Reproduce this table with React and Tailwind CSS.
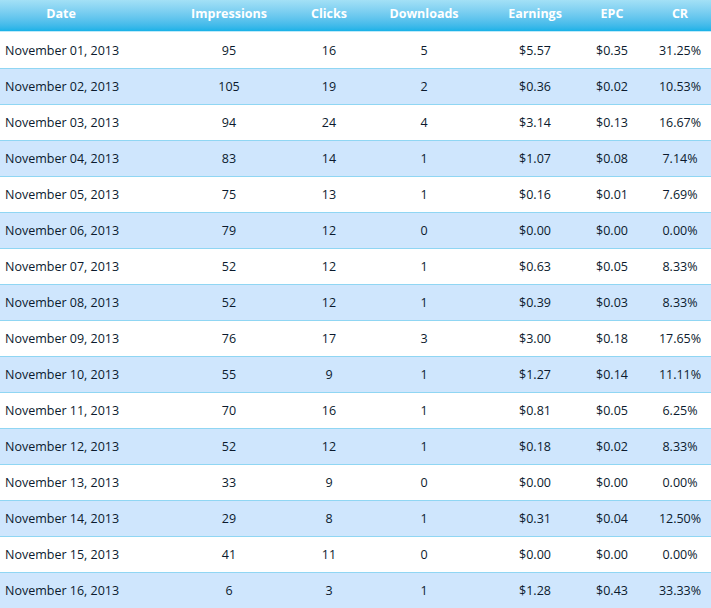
const rows = [
  ["November 01, 2013", 95, 16, 5, "$5.57", "$0.35", "31.25%"],
  ["November 02, 2013", 105, 19, 2, "$0.36", "$0.02", "10.53%"],
  ["November 03, 2013", 94, 24, 4, "$3.14", "$0.13", "16.67%"],
  ["November 04, 2013", 83, 14, 1, "$1.07", "$0.08", "7.14%"],
  ["November 05, 2013", 75, 13, 1, "$0.16", "$0.01", "7.69%"],
  ["November 06, 2013", 79, 12, 0, "$0.00", "$0.00", "0.00%"],
  ["November 07, 2013", 52, 12, 1, "$0.63", "$0.05", "8.33%"],
  ["November 08, 2013", 52, 12, 1, "$0.39", "$0.03", "8.33%"],
  ["November 09, 2013", 76, 17, 3, "$3.00", "$0.18", "17.65%"],
  ["November 10, 2013", 55, 9, 1, "$1.27", "$0.14", "11.11%"],
  ["November 11, 2013", 70, 16, 1, "$0.81", "$0.05", "6.25%"],
  ["November 12, 2013", 52, 12, 1, "$0.18", "$0.02", "8.33%"],
  ["November 13, 2013", 33, 9, 0, "$0.00", "$0.00", "0.00%"],
  ["November 14, 2013", 29, 8, 1, "$0.31", "$0.04", "12.50%"],
  ["November 15, 2013", 41, 11, 0, "$0.00", "$0.00", "0.00%"],
  ["November 16, 2013", 6, 3, 1, "$1.28", "$0.43", "33.33%"],
];

const headers = ["Date", "Impressions", "Clicks", "Downloads", "Earnings", "EPC", "CR"];

// each column is placed so its text centre sits where the screenshot has it
const cols = [
  "w-[122px] shrink-0",
  "ml-[57px] w-[100px] shrink-0 text-center",
  "ml-[10px] w-[80px] shrink-0 text-center",
  "ml-[10px] w-[90px] shrink-0 text-center",
  "ml-[26px] w-[80px] shrink-0 text-center",
  "ml-[7px] w-[60px] shrink-0 text-center",
  "ml-[8px] w-[60px] shrink-0 text-center",
];

export default function App() {
  return (
    <div className="w-[711px] h-[608px] overflow-hidden bg-white">
      <div className="flex h-[32px] items-center border-b border-[#bfeaf9] bg-gradient-to-b from-[#a3e0f6] to-[#17b2e7] pb-[2px] font-['Open_Sans',sans-serif] text-[12.5px] font-bold text-white">
        {headers.map((h, i) => (
          <div key={h} className={cols[i] + (i === 0 ? " text-center" : "")}>
            {h}
          </div>
        ))}
      </div>
      {rows.map((r, ri) => (
        <div
          key={r[0]}
          className={[
            "flex h-[36px] items-center whitespace-nowrap pt-[2px] font-['Open_Sans',sans-serif] text-[12.5px] text-[#0b1a2e]",
            ri > 0 ? "border-t border-[#90d6f3]" : "",
            ri % 2 === 1 ? "bg-[#cfe6fd]" : "bg-white",
          ].join(" ")}
        >
          {r.map((v, i) => (
            <div key={i} className={cols[i] + (i === 0 ? " pl-[5px]" : "")}>
              {v}
            </div>
          ))}
        </div>
      ))}
    </div>
  );
}
